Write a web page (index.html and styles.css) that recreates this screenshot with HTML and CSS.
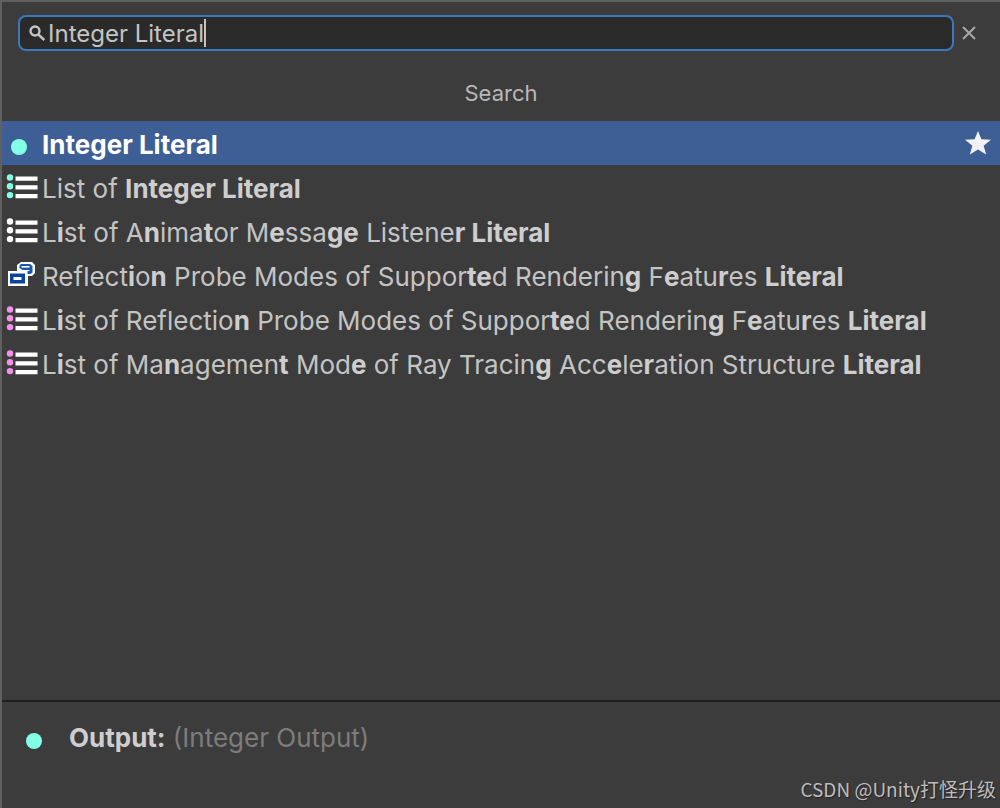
FILE: index.html
```html
<!DOCTYPE html>
<html lang="en">
<head>
<meta charset="utf-8">
<title>Search</title>
<link rel="stylesheet" href="styles.css">
</head>
<body>
<svg class="defs" aria-hidden="true">
  <symbol id="list" viewBox="0 0 32 26">
    <g fill="currentColor"><circle cx="4" cy="3.500" r="3.200"/><circle cx="4" cy="12.300" r="3.200"/><circle cx="4" cy="21.100" r="3.200"/></g>
    <path d="M9.500 2.500h22v4.200h-22zM9.500 11.300h22v4.200h-22zM9.500 20.100h22v4.200h-22z" fill="#fff"/>
  </symbol>
</svg>
<main class="finder">
  <form class="search" role="search">
    <label class="field">
      <svg class="lens" viewBox="0 0 18 18" aria-hidden="true"><circle cx="7" cy="7" r="4.500"/><path d="M10.300 10.500l6 5.500"/></svg>
      <input class="query" type="text" value="Integer Literal" size="12" aria-label="Search">
      <span class="caret"></span>
    </label>
    <button class="clear" type="button" aria-label="Clear"><svg viewBox="0 0 14 14"><path d="M1 1l12 12M13 1L1 13"/></svg></button>
  </form>
  <h1 class="title">Search</h1>
  <ul class="results">
    <li class="row selected"><span class="icon"><i class="dot"></i></span><span class="name"><b>Integer Literal</b></span>
      <button class="star" type="button" aria-label="Favorite"><svg viewBox="0 0 26 24"><path d="M13 0l3.400 8.200 9.600.5-7.400 6 2.600 8.800L13 18.500l-8.200 5 2.600-8.800-7.400-6 9.600-.5z"/></svg></button></li>
    <li class="row"><svg class="icon mint"><use href="#list"/></svg><span class="name">List of <b>Integer Literal</b></span></li>
    <li class="row"><svg class="icon white"><use href="#list"/></svg><span class="name">L<b>i</b>st of A<b>n</b>ima<b>t</b>or M<b>e</b>ssa<b>ge</b> Listene<b>r Literal</b></span></li>
    <li class="row"><svg class="icon" viewBox="0 0 32 26">
      <path d="M15 0h11l3 3v8l-3 3h-4v10H2V9h9V3z" fill="#fff"/>
      <path d="M15 2h9l2.500 2v6.500l-2 1.500h-3V9h2V8h-7l-3-2V3.500z" fill="#1759a8"/><path d="M15.500 4h8v1.600h-8z" fill="#fff"/>
      <path d="M4 11.500h15v10H4z" fill="#0c439b"/><path d="M7.500 15h8v3h-8z" fill="#fff"/></svg><span class="name">Reflect<b>i</b>o<b>n</b> Probe Modes of Suppor<b>te</b>d Renderin<b>g</b> F<b>e</b>atu<b>r</b>es <b>Literal</b></span></li>
    <li class="row"><svg class="icon pink"><use href="#list"/></svg><span class="name">L<b>i</b>st of Reflectio<b>n</b> Probe Modes of Suppor<b>te</b>d Renderin<b>g</b> F<b>e</b>atu<b>r</b>es <b>Literal</b></span></li>
    <li class="row"><svg class="icon pink"><use href="#list"/></svg><span class="name">L<b>i</b>st of Ma<b>n</b>agemen<b>t</b> Mod<b>e</b> of Ray Tracin<b>g</b> Acc<b>e</b>le<b>r</b>ation Structure <b>Literal</b></span></li>
  </ul>
  <footer class="details">
    <p class="output"><i class="dot"></i><span><b>Output:</b> <span class="type">(Integer Output)</span></span></p>
    <p class="credit">CSDN @Unity打怪升级</p>
  </footer>
</main>
</body>
</html>
```
FILE: styles.css
```css
* { box-sizing: border-box; }
body { margin: 0; background: #3c3c3c; color: #c4c4c4; font-family: Inter, "Noto Sans CJK SC", sans-serif; }
p, h1, ul { margin: 0; padding: 0; }
button { padding: 0; border: 0; background: none; }
svg { display: block; }
b { font-weight: 700; color: #cecece; }
.defs { position: absolute; width: 0; height: 0; }
.finder { display: flex; flex-direction: column; min-height: 100vh; border: solid #606060; border-width: 2px 0 0 2px; }
.search { display: flex; align-items: center; gap: 8px; padding: 13px 24px 0 16px; }
.field { display: flex; flex: 1; align-items: center; height: 36px; padding-left: 8px; border: 2px solid #3a79bb; border-radius: 8px; background: #2a2a2a; }
.lens { width: 18px; height: 18px; margin-right: 2px; fill: none; stroke: #c4c4c4; stroke-width: 2.4; }
.query { field-sizing: content; padding: 0; border: 0; outline: 0; background: none; color: #c4c4c4; font: 24px Inter, sans-serif; }
.caret { width: 2px; height: 28px; background: #c4c4c4; }
.clear { width: 14px; height: 14px; }
.clear svg { width: 14px; height: 14px; stroke: #a8a8a8; stroke-width: 2; }
.title { padding: 28px 0 14px; font-size: 22px; line-height: 28px; font-weight: 400; text-align: center; color: #b8b8b8; }
.results { flex: 1; list-style: none; }
.row { display: flex; align-items: center; gap: 4px; height: 44px; padding: 0 9px 0 4px; font-size: 26px; line-height: 40px; }
.row .icon { flex: none; width: 32px; height: 26px; }
span.icon { display: flex; align-items: center; padding: 8px 0 0 5px; }
.name { flex: 1; padding-top: 4px; white-space: nowrap; }
.dot { flex: none; width: 16px; height: 16px; border-radius: 50%; background: #83ffe6; }
.selected { background: #3e5f96; }
.selected b { color: #fff; }
.star svg { width: 26px; height: 24px; fill: #f2f2f2; }
.mint { color: #83ffe6; }
.white { color: #fff; }
.pink { color: #f590e8; }
.details { display: flex; flex-direction: column; justify-content: space-between; min-height: 108px; padding: 19px 4px 4px 24px; border-top: 2px solid #1e1e1e; }
.output { display: flex; align-items: center; gap: 27px; font-size: 26px; line-height: 34px; }
.output .dot { margin-top: 6px; }
.type { color: #7c7c7c; }
.credit { align-self: flex-end; font: 19px/30px "Noto Sans CJK SC", sans-serif; color: #bdbdbd; text-shadow: 1px 1px 1px #222; }
```
